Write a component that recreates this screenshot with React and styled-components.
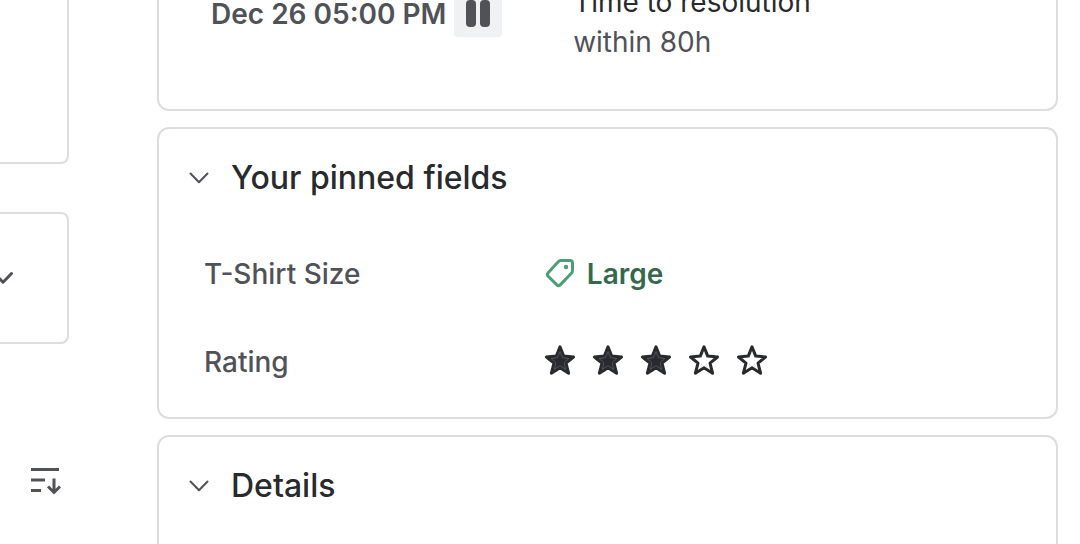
import React, { useState } from "react";
import styled, { createGlobalStyle } from "styled-components";

const GlobalStyle = createGlobalStyle`
  * {
    box-sizing: border-box;
  }
  body {
    margin: 0;
    overflow: hidden;
    background: #ffffff;
    color: #292a2e;
    font-family: "Inter", "Liberation Sans", sans-serif;
  }
`;

const starPath =
  "M15 1.8 L18.7 11.1 L28.5 12 L21 18.2 L23.6 28.2 L15 22.7 L6.4 28.2 L9 18.2 L1.5 12 L11.3 11.1 Z";
const starInner =
  "M15 6.5 L17.6 12.7 L23.8 13.6 L19.1 17.8 L20.7 24.2 L15 20.7 L9.3 24.2 L10.9 17.8 L6.2 13.6 L12.4 12.7 Z";

function ChevronIcon({ strokeWidth = 2 }) {
  return (
    <svg width="32" height="32" viewBox="0 0 32 32" fill="none" aria-hidden="true">
      <path d="M7.5 11.5 L16 20.2 L24.5 11.5" stroke="#505258" strokeWidth={strokeWidth} strokeLinecap="round" strokeLinejoin="round" />
    </svg>
  );
}

function PauseIcon() {
  return (
    <svg width="32" height="32" viewBox="0 0 32 32" aria-hidden="true">
      <rect x="4" y="2" width="10" height="27" rx="4" fill="#505258" />
      <rect x="18" y="2" width="10" height="27" rx="4" fill="#505258" />
    </svg>
  );
}

function SortIcon() {
  return (
    <svg width="32" height="32" viewBox="0 0 32 32" fill="none" stroke="#505258" strokeWidth="3" aria-hidden="true">
      <path d="M2 4.5 H30 M2 15 H16 M2 25.5 H12" />
      <path d="M25 13.5 V27 M19 21.5 L25 27.5 L31 21.5" />
    </svg>
  );
}

function TagIcon() {
  return (
    <svg width="30" height="30" viewBox="0 0 30 30" fill="none" aria-hidden="true">
      <path
        d="M15.8 2.5 H25 Q27.5 2.5 27.5 5 V12.6 Q27.5 14.2 26.4 15.3 L15.2 26.9 Q13.5 28.6 11.8 26.9 L3.2 18.2 Q1.5 16.5 3.2 14.8 L13.2 3.7 Q14.3 2.5 15.8 2.5 Z"
        stroke="#4aa074"
        strokeWidth="3"
        strokeLinejoin="round"
      />
      <circle cx="21" cy="9" r="2.2" fill="#4aa074" />
    </svg>
  );
}

function StarIcon({ filled }) {
  return (
    <svg width="30" height="32" viewBox="0 0 30 32" fill="none" aria-hidden="true">
      <path d={starPath} fill={filled ? "#292a2e" : "none"} stroke="#292a2e" strokeWidth="3" strokeLinejoin="round" />
      {filled && <path d={starInner} stroke="#6b6e76" strokeWidth="0.6" />}
    </svg>
  );
}

export default function App() {
  const [rating, setRating] = useState(3);
  const [pinnedOpen, setPinnedOpen] = useState(true);

  return (
    <>
      <GlobalStyle />
      <Page>
        <MainColumn>
          <MainCard />
          <MainCard $short>
            <IconButton aria-label="Expand">
              <ChevronIcon strokeWidth={3} />
            </IconButton>
          </MainCard>
          <SortButton aria-label="Sort">
            <SortIcon />
          </SortButton>
        </MainColumn>

        <SideColumn>
          <Card>
            <SlaRow>
              <SlaTime>
                Dec 26 05:00 PM
                <PauseButton aria-label="Pause">
                  <PauseIcon />
                </PauseButton>
              </SlaTime>
              <SlaGoal>
                <SlaName>Time to resolution</SlaName>
                <SlaLimit>within 80h</SlaLimit>
              </SlaGoal>
            </SlaRow>
          </Card>

          <Card>
            <CardHeader>
              <HeaderButton aria-expanded={pinnedOpen} onClick={() => setPinnedOpen(!pinnedOpen)}>
                <ChevronIcon />
                Your pinned fields
              </HeaderButton>
            </CardHeader>
            {pinnedOpen && (
              <FieldList>
                <FieldRow>
                  <FieldLabel>T-Shirt Size</FieldLabel>
                  <FieldValue $gap="12px">
                    <TagIcon />
                    <TagText>Large</TagText>
                  </FieldValue>
                </FieldRow>
                <FieldRow>
                  <FieldLabel>Rating</FieldLabel>
                  <FieldValue $gap="18px">
                    {[1, 2, 3, 4, 5].map((value) => (
                      <IconButton key={value} aria-label={`Rate ${value}`} onClick={() => setRating(value)}>
                        <StarIcon filled={value <= rating} />
                      </IconButton>
                    ))}
                  </FieldValue>
                </FieldRow>
              </FieldList>
            )}
          </Card>

          <Card $last>
            <CardHeader>
              <HeaderButton aria-expanded="true">
                <ChevronIcon />
                Details
              </HeaderButton>
            </CardHeader>
          </Card>
        </SideColumn>
      </Page>
    </>
  );
}

const Page = styled.main`
  display: grid;
  grid-template-columns: 69px minmax(0, 1fr);
  column-gap: 88px;
  height: 100vh;
  padding-right: 22px;
  overflow: hidden;
`;

/* both columns are scrolled a little past their first card's top */
const MainColumn = styled.section`
  display: flex;
  flex-direction: column;
  margin: -45px 0 0 -16px;
`;

const SideColumn = styled.aside`
  display: flex;
  flex-direction: column;
  gap: 16px;
  margin-top: -45px;
`;

const MainCard = styled.div`
  display: flex;
  align-items: center;
  justify-content: flex-end;
  flex-shrink: 0;
  min-height: ${({ $short }) => ($short ? "132px" : "209px")};
  margin-bottom: ${({ $short }) => ($short ? "113px" : "48px")};
  padding-right: 48px;
  border: 2px solid #dddddd;
  border-radius: 8px;
`;

const Card = styled.section`
  flex-shrink: 0;
  padding-top: 25px;
  min-height: ${({ $last }) => ($last ? "160px" : "0")};
  border: 2px solid #dddddd;
  border-radius: 12px;
`;

const IconButton = styled.button`
  display: flex;
  align-items: center;
  justify-content: center;
  flex-shrink: 0;
  padding: 0;
  border: none;
  background: none;
  cursor: pointer;
`;

const SortButton = styled(IconButton)`
  align-self: flex-end;
  width: 48px;
  height: 48px;
`;

const PauseButton = styled(IconButton)`
  width: 48px;
  height: 46px;
  border-radius: 4px;
  background: #f0f1f2;
`;

const SlaRow = styled.div`
  display: grid;
  grid-template-columns: 3fr 4fr;
  padding: 0 0 47px 52px;
  font-size: 28px;
  line-height: 40px;
`;

const SlaTime = styled.div`
  display: flex;
  align-items: center;
  align-self: start;
  gap: 8px;
  padding-top: 9px;
  color: #505258;
  font-weight: 600;
  white-space: nowrap;
`;

const SlaGoal = styled.div`
  display: flex;
  flex-direction: column;
`;

const SlaName = styled.span`
  color: #292a2e;
`;

const SlaLimit = styled.span`
  color: #505258;
`;

const CardHeader = styled.h2`
  margin: 0;
  padding-left: 24px;
`;

const HeaderButton = styled.button`
  display: flex;
  align-items: center;
  gap: 16px;
  padding: 0;
  border: none;
  background: none;
  color: #292a2e;
  font-family: inherit;
  font-size: 32px;
  font-weight: 500;
  line-height: 48px;
  cursor: pointer;
`;

const FieldList = styled.dl`
  display: flex;
  flex-direction: column;
  gap: 40px;
  margin: 0;
  padding: 47px 0 32px 45px;
`;

const FieldRow = styled.div`
  display: grid;
  grid-template-columns: 2fr 3fr;
  align-items: center;
  min-height: 48px;
`;

const FieldLabel = styled.dt`
  padding-top: 2px;
  color: #505258;
  font-size: 28px;
  font-weight: 500;
  line-height: 40px;
`;

const FieldValue = styled.dd`
  display: flex;
  align-items: center;
  gap: ${({ $gap }) => $gap};
  margin: 0;
`;

const TagText = styled.span`
  padding-top: 2px;
  color: #35694d;
  font-size: 28px;
  font-weight: 600;
  line-height: 40px;
`;
